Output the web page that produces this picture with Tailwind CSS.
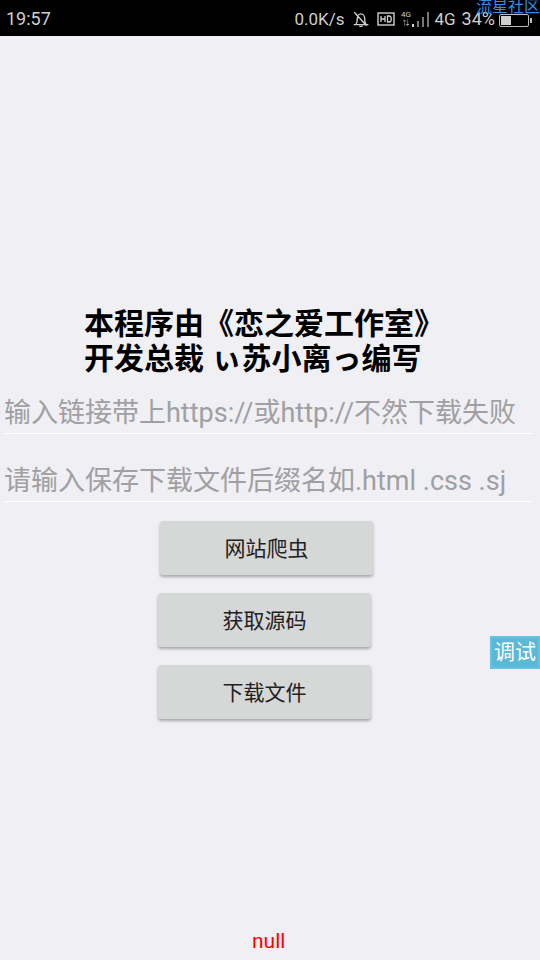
<!DOCTYPE html>
<html lang="zh">

<head>
    <meta charset="UTF-8">
    <meta name="viewport" content="width=device-width, initial-scale=1.0">
    <title>网站爬虫</title>
    <script src="https://cdn.jsdelivr.net/npm/@tailwindcss/browser@4"></script>
</head>

<body class="font-['Roboto','Noto_Sans_CJK_SC',sans-serif]">
    <div class="relative w-[540px] h-[960px] overflow-hidden bg-[#efeff4] flex flex-col">

        <!-- status bar -->
        <div class="h-9 shrink-0 bg-black text-[#cfcfcf] flex items-center pl-[6px] pt-[2px]">
            <span class="text-[18px] leading-none">19:57</span>
            <div class="ml-auto flex items-center pr-[8px]">
                <span class="text-[17px] leading-none">0.0K/s</span>
                <svg class="ml-[8px] w-[18px] h-[18px]" viewBox="0 0 16 16" fill="none" stroke="#cfcfcf" stroke-width="1.2">
                    <path d="M1.5 13h13M3.5 13c1-1.500 1.200-3 1.200-5 0-2.500 1.400-4.500 3.300-4.500s3.300 2 3.300 4.500c0 2 .2 3.500 1.200 5M6.500 14.500h3M2 2l11 12" />
                </svg>
                <svg class="ml-[7px] w-[18px] h-[14px]" viewBox="0 0 18 14" fill="none">
                    <rect x="1" y="1" width="16" height="12" stroke="#cfcfcf" stroke-width="1.4" />
                    <path d="M4 4v6M8 4v6M4 7h4M10.500 4v6h1.500c3 0 3-6 0-6z" stroke="#cfcfcf" stroke-width="1.300" />
                </svg>
                <div class="ml-[5px] w-[11px] flex flex-col items-center text-[8px] leading-[9px] text-[#cfcfcf]">
                    <span>4G</span>
                    <span class="text-[7px]">⇅</span>
                </div>
                <div class="ml-[1px] flex items-end gap-[3px] h-[16px]">
                    <div class="w-[2px] h-[3px] bg-[#cfcfcf]"></div>
                    <div class="w-[2px] h-[6px] bg-[#777]"></div>
                    <div class="w-[2px] h-[10px] bg-[#777]"></div>
                    <div class="w-[2px] h-[15px] bg-[#777]"></div>
                </div>
                <span class="ml-[5px] text-[17px] leading-none">4G</span>
                <span class="ml-[6px] text-[18px] leading-none">34%</span>
                <div class="ml-[4px] w-[30px] h-[13px] border border-[#bbb] rounded-[2px] p-[1px] mt-[2px]">
                    <div class="w-[10px] h-full bg-[#cfcfcf]"></div>
                </div>
                <div class="w-[2px] h-[5px] bg-[#bbb] ml-[1px] mt-[2px]"></div>
            </div>
        </div>

        <!-- main content -->
        <div class="pt-[270px] flex flex-col">
            <div class="pl-[84px] text-[30px] leading-[35px] font-bold text-black whitespace-nowrap">
                <p>本程序由《恋之爱工作室》</p>
                <p>开发总裁 ぃ苏小离っ编写</p>
            </div>

            <div class="mt-[14px] ml-[4px] w-[529px] h-[44px] border-b border-white text-[27px] leading-[36px] text-[#a0a0a2] whitespace-nowrap overflow-hidden pt-[5px]">输入链接带上https://或http://不然下载失败</div>
            <div class="mt-[24px] ml-[4px] w-[529px] h-[44px] border-b border-white text-[27px] leading-[36px] text-[#a0a0a2] whitespace-nowrap overflow-hidden pt-[5px]">请输入保存下载文件后缀名如.html .css .sj</div>

            <div class="mt-[19px] flex flex-col gap-[18px] text-[21px] text-[#222]">
                <button class="ml-[160px] w-[213px] h-[54px] pt-[3px] bg-[#d6d7d7] rounded-[3px] shadow-[0_2px_3px_rgba(0,0,0,0.3)]">网站爬虫</button>
                <button class="ml-[158px] w-[213px] h-[54px] pt-[3px] bg-[#d6d7d7] rounded-[3px] shadow-[0_2px_3px_rgba(0,0,0,0.3)]">获取源码</button>
                <button class="ml-[158px] w-[213px] h-[54px] pt-[3px] bg-[#d6d7d7] rounded-[3px] shadow-[0_2px_3px_rgba(0,0,0,0.3)]">下载文件</button>
            </div>
        </div>

        <p class="mt-auto mb-[6px] ml-[252px] text-[21px] leading-[26px] text-[#ff0000]">null</p>

        <!-- overlays -->
        <span class="absolute left-[476px] top-[-3px] text-[16px] leading-[20px] text-[#2f8fe8] whitespace-nowrap">流星社区</span>
        <div class="absolute left-[490px] top-[636px] w-[50px] h-[33px] bg-[#5bb8d6] border-2 border-[#62c4e2] text-white text-[21px] leading-[29px] text-center whitespace-nowrap">调试</div>
    </div>
</body>

</html>
